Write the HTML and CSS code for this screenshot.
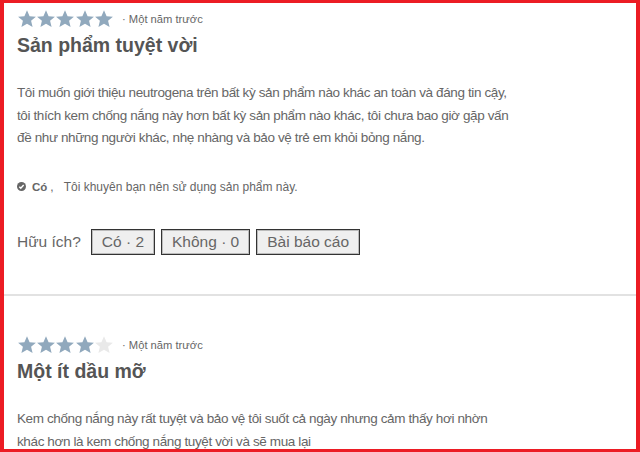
FILE: index.html
```html
<!DOCTYPE html>
<html lang="vi">
<head>
    <meta charset="UTF-8">
    <meta name="viewport" content="width=device-width, initial-scale=1.0">
    <title>Đánh giá</title>
    <link rel="stylesheet" href="styles.css">
</head>
<body>
    <div class="frame">
        <div class="review first">
            <div class="review-head">
                <div class="stars">
                    <svg class="star on" viewBox="0 0 24 24"><path d="M12 1.5l3.1 7.1 7.6.6-5.8 5 1.8 7.5L12 17.7l-6.7 4 1.8-7.5-5.8-5 7.6-.6z"/></svg>
                    <svg class="star on" viewBox="0 0 24 24"><path d="M12 1.5l3.1 7.1 7.6.6-5.8 5 1.8 7.5L12 17.7l-6.7 4 1.8-7.5-5.8-5 7.6-.6z"/></svg>
                    <svg class="star on" viewBox="0 0 24 24"><path d="M12 1.5l3.1 7.1 7.6.6-5.8 5 1.8 7.5L12 17.7l-6.7 4 1.8-7.5-5.8-5 7.6-.6z"/></svg>
                    <svg class="star on" viewBox="0 0 24 24"><path d="M12 1.5l3.1 7.1 7.6.6-5.8 5 1.8 7.5L12 17.7l-6.7 4 1.8-7.5-5.8-5 7.6-.6z"/></svg>
                    <svg class="star on" viewBox="0 0 24 24"><path d="M12 1.5l3.1 7.1 7.6.6-5.8 5 1.8 7.5L12 17.7l-6.7 4 1.8-7.5-5.8-5 7.6-.6z"/></svg>
                </div>
                <span class="meta">· Một năm trước</span>
            </div>
            <h2 class="title">Sản phẩm tuyệt vời</h2>
            <p class="text">Tôi muốn giới thiệu neutrogena trên bất kỳ sản phẩm nào khác an toàn và đáng tin cậy, tôi thích kem chống nắng này hơn bất kỳ sản phẩm nào khác, tôi chưa bao giờ gặp vấn đề như những người khác, nhẹ nhàng và bảo vệ trẻ em khỏi bỏng nắng.</p>
            <div class="recommend">
                <svg class="check" viewBox="0 0 10 10"><circle cx="5" cy="5" r="5"/><path d="M2.6 5.2l1.6 1.6 3.2-3.4"/></svg>
                <strong>Có</strong><span class="comma">,</span>
                <span>Tôi khuyên bạn nên sử dụng sản phẩm này.</span>
            </div>
            <div class="helpful">
                <span class="helpful-label">Hữu ích?</span>
                <button class="vote">Có · 2</button>
                <button class="vote">Không · 0</button>
                <button class="vote">Bài báo cáo</button>
            </div>
        </div>

        <div class="review second">
            <div class="review-head">
                <div class="stars">
                    <svg class="star on" viewBox="0 0 24 24"><path d="M12 1.5l3.1 7.1 7.6.6-5.8 5 1.8 7.5L12 17.7l-6.7 4 1.8-7.5-5.8-5 7.6-.6z"/></svg>
                    <svg class="star on" viewBox="0 0 24 24"><path d="M12 1.5l3.1 7.1 7.6.6-5.8 5 1.8 7.5L12 17.7l-6.7 4 1.8-7.5-5.8-5 7.6-.6z"/></svg>
                    <svg class="star on" viewBox="0 0 24 24"><path d="M12 1.5l3.1 7.1 7.6.6-5.8 5 1.8 7.5L12 17.7l-6.7 4 1.8-7.5-5.8-5 7.6-.6z"/></svg>
                    <svg class="star on" viewBox="0 0 24 24"><path d="M12 1.5l3.1 7.1 7.6.6-5.8 5 1.8 7.5L12 17.7l-6.7 4 1.8-7.5-5.8-5 7.6-.6z"/></svg>
                    <svg class="star off" viewBox="0 0 24 24"><path d="M12 1.5l3.1 7.1 7.6.6-5.8 5 1.8 7.5L12 17.7l-6.7 4 1.8-7.5-5.8-5 7.6-.6z"/></svg>
                </div>
                <span class="meta">· Một năm trước</span>
            </div>
            <h2 class="title">Một ít dầu mỡ</h2>
            <p class="text">Kem chống nắng này rất tuyệt và bảo vệ tôi suốt cả ngày nhưng cảm thấy hơi nhờn khác hơn là kem chống nắng tuyệt vời và sẽ mua lại</p>
        </div>
    </div>
</body>
</html>
```

FILE: styles.css
```css
body {
    margin: 0;
    font-family: "Liberation Sans", Arial, sans-serif;
    background-color: white;
}
.frame {
    width: 640px;
    height: 452px;
    box-sizing: border-box;
    border-style: solid;
    border-color: #ec1c24;
    border-width: 3px 4px 3px 4px;
    overflow: hidden;
    background-color: white;
}
.review {
    padding: 7px 13px 0;
}
.review.first {
    height: 284px;
    border-bottom: 2px solid #e2e2e2;
}
.review.second {
    padding-top: 40px;
}
.review-head {
    display: flex;
    align-items: center;
    height: 18px;
}
.stars {
    display: flex;
}
.star {
    width: 20px;
    height: 20px;
    margin-right: -0.8px;
}
.star.on {
    fill: #91a9bd;
}
.star.off {
    fill: #e9e9e9;
}
.meta {
    font-size: 11.2px;
    color: #666;
    margin-left: 9px;
}
.title {
    margin: 5px 0 0;
    font-size: 19.5px;
    line-height: 24px;
    color: #555;
}
.text {
    width: 495px;
    margin: 25px 0 0;
    font-size: 13.5px;
    letter-spacing: -0.38px;
    line-height: 22.5px;
    color: #666;
}
.recommend {
    display: flex;
    align-items: center;
    margin-top: 30px;
    font-size: 12px;
    color: #666;
}
.recommend strong {
    font-size: 11.5px;
}
.check {
    width: 9px;
    height: 9px;
    margin-right: 6px;
}
.check circle {
    fill: #666;
}
.check path {
    fill: none;
    stroke: white;
    stroke-width: 1.6;
}
.comma {
    margin: 0 10px 0 3px;
}
.helpful {
    display: flex;
    align-items: center;
    gap: 6px;
    margin-top: 35px;
    font-size: 15.5px;
    color: #666;
}
.helpful-label {
    margin-right: 4px;
}
.vote {
    height: 26px;
    padding: 0 10px;
    font-family: inherit;
    font-size: 15.5px;
    color: #666;
    background-color: #efefef;
    border: 1px solid #333;
    box-shadow: inset 0 0 0 1px #bbb;
    border-radius: 0;
}
```
